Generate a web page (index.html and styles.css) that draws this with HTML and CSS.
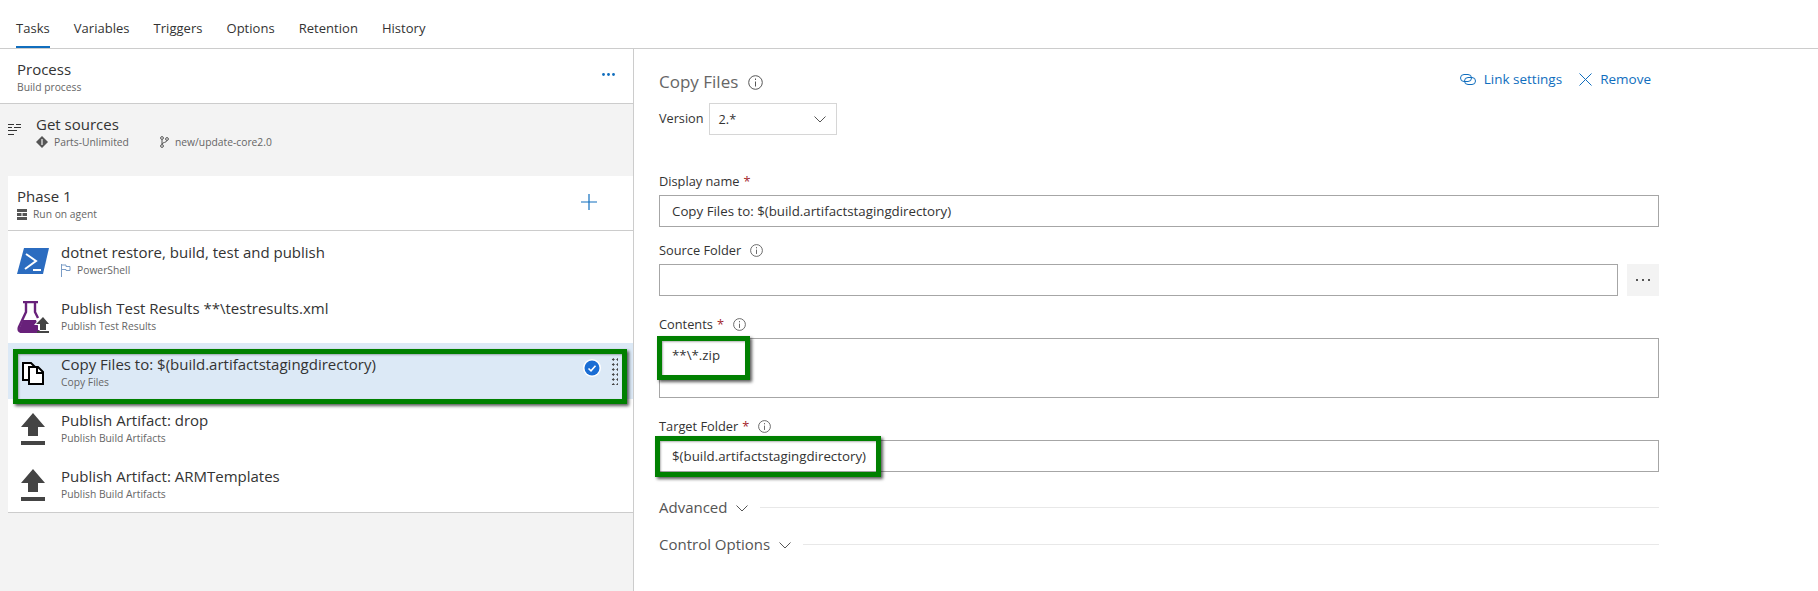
FILE: index.html
```html
<!DOCTYPE html>
<html lang="en">
<head>
    <meta charset="UTF-8">
    <title>Tasks</title>
    <link rel="stylesheet" href="styles.css">
</head>
<body>
    <!-- tabs -->
    <nav class="tabs">
        <span class="tab active">Tasks</span>
        <span class="tab">Variables</span>
        <span class="tab">Triggers</span>
        <span class="tab">Options</span>
        <span class="tab">Retention</span>
        <span class="tab">History</span>
    </nav>

    <div class="main">
        <!-- left list -->
        <section class="left">
            <div class="process">
                <div>
                    <div class="title">Process</div>
                    <div class="sub">Build process</div>
                </div>
                <svg class="more" width="13" height="3" viewBox="0 0 13 3"><circle cx="1.5" cy="1.5" r="1.4"/><circle cx="6.5" cy="1.5" r="1.4"/><circle cx="11.5" cy="1.5" r="1.4"/></svg>
            </div>

            <div class="sources">
                <svg class="sources-icon" width="14" height="13" viewBox="0 0 14 13"><path d="M1 1.5h6M9 1.5h5M1 4.5h4M7 4.5h7M1 7.5h9M1 11.5h6" stroke="#333" stroke-width="1" fill="none"/></svg>
                <div>
                    <div class="title">Get sources</div>
                    <div class="sub sources-sub">
                        <svg width="12" height="12" viewBox="0 0 12 12"><path d="M6 0l6 6-6 6-6-6z" fill="#555"/><path d="M6 3v6" stroke="#f3f3f3" stroke-width="1.2"/></svg>
                        <span class="repo">Parts-Unlimited</span>
                        <svg width="9" height="12" viewBox="0 0 9 12"><g fill="none" stroke="#555"><circle cx="2" cy="2" r="1.4"/><circle cx="2" cy="10" r="1.4"/><circle cx="7" cy="3" r="1.4"/><path d="M2 3.5v5M7 4.5c0 2-5 2-5 3.5"/></g></svg>
                        <span>new/update-core2.0</span>
                    </div>
                </div>
            </div>

            <div class="phase">
                <div class="phase-head">
                    <div>
                        <div class="title">Phase 1</div>
                        <div class="sub sub-icon">
                            <svg width="10" height="11" viewBox="0 0 10 11"><path d="M0 0h10v11H0z" fill="#555"/><path d="M0 3.5h10M0 7.5h10M5 3.5v4" stroke="#fff"/></svg>
                            <span>Run on agent</span>
                        </div>
                    </div>
                    <svg class="plus" width="16" height="16" viewBox="0 0 16 16"><path d="M8 0v16M0 8h16" stroke="#106ebe" stroke-width="1.2" fill="none"/></svg>
                </div>

                <ul class="steps">
                    <li class="step">
                        <svg class="step-icon" width="32" height="32" viewBox="0 0 32 32"><path d="M7 3h25l-6 26H0z" fill="#2b6cc0"/><path d="M9 9l10 7-11 8M16 25h8" fill="none" stroke="#fff" stroke-width="2"/></svg>
                        <div>
                            <div class="title">dotnet restore, build, test and publish</div>
                            <div class="sub sub-icon">
                                <svg width="10" height="13" viewBox="0 0 10 13"><path d="M.5 0v13M.5 1h4.500v1.500h4v4h-4V5.500h-4.500" fill="none" stroke="#7a9cc6"/></svg>
                                <span>PowerShell</span>
                            </div>
                        </div>
                    </li>
                    <li class="step">
                        <svg class="step-icon" width="32" height="32" viewBox="0 0 32 32"><path d="M6 1h15M9 1v10L2 26c-1 3 0 5 3 5h17M18 1v10l3 6" fill="none" stroke="#68217a" stroke-width="2.400"/><path d="M6 19h13l4 12H5c-3 0-3-3-2-5z" fill="#68217a"/><path d="M26 14l-9 10h4v5h10v-5h1z" fill="#fff"/><path d="M26 16l-7 7h4v6h6v-6h3z" fill="#444"/><path d="M20 31h12" stroke="#444" stroke-width="2"/></svg>
                        <div>
                            <div class="title">Publish Test Results **\testresults.xml</div>
                            <div class="sub">Publish Test Results</div>
                        </div>
                    </li>
                    <li class="step selected">
                        <svg class="step-icon" width="32" height="32" viewBox="0 0 32 32"><g fill="#fff" stroke="#000" stroke-width="2"><path d="M6 6h8l4 4v13H6z"/><path d="M12 10h9l5 5v12H12z"/></g><path d="M20 10v6h6" fill="none" stroke="#000" stroke-width="2"/></svg>
                        <div>
                            <div class="title">Copy Files to: $(build.artifactstagingdirectory)</div>
                            <div class="sub">Copy Files</div>
                        </div>
                        <svg class="check" width="18" height="18" viewBox="0 0 18 18"><circle cx="9" cy="9" r="9" fill="#fff"/><circle cx="9" cy="9" r="7.500" fill="#1a6dd4"/><path d="M5.500 9.500l2.500 2.300 4.500-5" fill="none" stroke="#fff" stroke-width="1.600"/></svg>
                        <span class="grip"></span>
                        <span class="mark mark-step"></span>
                    </li>
                    <li class="step">
                        <svg class="step-icon" width="32" height="32" viewBox="0 0 32 32"><path d="M16 0l12 14h-7v9h-10v-9H4zM4 28h24v4H4z" fill="#444"/></svg>
                        <div>
                            <div class="title">Publish Artifact: drop</div>
                            <div class="sub">Publish Build Artifacts</div>
                        </div>
                    </li>
                    <li class="step">
                        <svg class="step-icon" width="32" height="32" viewBox="0 0 32 32"><path d="M16 0l12 14h-7v9h-10v-9H4zM4 28h24v4H4z" fill="#444"/></svg>
                        <div>
                            <div class="title">Publish Artifact: ARMTemplates</div>
                            <div class="sub">Publish Build Artifacts</div>
                        </div>
                    </li>
                </ul>
            </div>
        </section>

        <!-- right form -->
        <section class="right">
            <div class="head">
                <h1 class="head-title">Copy Files
                    <svg class="info big" width="15" height="15" viewBox="0 0 15 15"><circle cx="7.500" cy="7.500" r="6.800"/><path d="M7.500 6.500v5M7.500 3.500v1.500"/></svg>
                </h1>
                <div class="links">
                    <span class="link">
                        <svg width="16" height="11" viewBox="0 0 16 11"><g fill="none" stroke="#106ebe"><rect x=".5" y=".5" width="11" height="7" rx="3.500"/><rect x="4.500" y="3.500" width="11" height="7" rx="3.500"/></g></svg>
                        Link settings
                    </span>
                    <span class="link">
                        <svg width="13" height="13" viewBox="0 0 13 13"><path d="M.5.500l12 12M12.500.500l-12 12" stroke="#106ebe" fill="none"/></svg>
                        Remove
                    </span>
                </div>
            </div>

            <div class="version">
                <span class="version-label">Version</span>
                <div class="select">
                    <span>2.*</span>
                    <svg class="chev" width="12" height="7" viewBox="0 0 12 7"><path d="M.5.500L6 6l5.500-5.500"/></svg>
                </div>
            </div>

            <div class="field first">
                <label>Display name <span class="req">*</span></label>
                <div class="input">Copy Files to: $(build.artifactstagingdirectory)</div>
            </div>

            <div class="field source">
                <label>Source Folder
                    <svg class="info" width="13" height="13" viewBox="0 0 15 15"><circle cx="7.500" cy="7.500" r="6.800"/><path d="M7.500 6.500v5M7.500 3.500v1.500"/></svg>
                </label>
                <div class="input-row">
                    <div class="input grow"></div>
                    <div class="browse">
                        <svg width="14" height="2" viewBox="0 0 14 2"><path d="M0 0h2v2H0zM6 0h2v2H6zM12 0h2v2h-2z" fill="#555"/></svg>
                    </div>
                </div>
            </div>

            <div class="field">
                <label>Contents <span class="req">*</span>
                    <svg class="info" width="13" height="13" viewBox="0 0 15 15"><circle cx="7.500" cy="7.500" r="6.800"/><path d="M7.500 6.500v5M7.500 3.500v1.500"/></svg>
                </label>
                <div class="input area">**\*.zip
                    <span class="mark mark-contents"></span>
                </div>
            </div>

            <div class="field">
                <label>Target Folder <span class="req">*</span>
                    <svg class="info" width="13" height="13" viewBox="0 0 15 15"><circle cx="7.500" cy="7.500" r="6.800"/><path d="M7.500 6.500v5M7.500 3.500v1.500"/></svg>
                </label>
                <div class="input">$(build.artifactstagingdirectory)
                    <span class="mark mark-target"></span>
                </div>
            </div>

            <div class="group advanced">
                <span>Advanced</span>
                <svg class="chev" width="12" height="7" viewBox="0 0 12 7"><path d="M.5.500L6 6l5.500-5.500"/></svg>
                <i class="rule"></i>
            </div>
            <div class="group">
                <span>Control Options</span>
                <svg class="chev" width="12" height="7" viewBox="0 0 12 7"><path d="M.5.500L6 6l5.500-5.500"/></svg>
                <i class="rule"></i>
            </div>
        </section>
    </div>
</body>
</html>
```

FILE: styles.css
```css
* {margin:0; padding:0; box-sizing:border-box;}
html, body {height:100%; overflow:hidden;}
body {
    font-family:"Open Sans", "Liberation Sans", sans-serif;
    font-size:13px;
    color:#333;
    background-color:#fff;
}

/* tabs */
.tabs {
    display:flex; gap:24px;
    height:49px;
    padding-left:16px;
    border-bottom:1px solid #ccc;
}
.tab {
    height:48px;
    padding-top:18px;
    line-height:20px;
    font-size:13px;
    letter-spacing:.03px;
}
.tab.active {border-bottom:2px solid #106ebe;}

.main {display:flex; height:542px;}

/* left */
.left {
    width:634px;
    background-color:#f3f3f3;
    border-right:1px solid #ccc;
}
.title {font-size:15px; line-height:19px; margin-bottom:1px; color:#333;}
.sub {font-size:10.3px; line-height:14px; color:#666;}
.sub-icon {display:flex; align-items:center; gap:6px;}

.process {
    display:flex; justify-content:space-between; align-items:flex-start;
    height:55px;
    padding:11px 18px 0 17px;
    background-color:#fff;
    border-bottom:1px solid #ccc;
}
.more {fill:#106ebe; margin-top:13px;}

.sources {
    display:flex;
    height:72px;
    padding:11px 0 0 7px;
}
.sources-icon {margin:8px 15px 0 0;}
.sources-sub {display:flex; align-items:center;}
.sources-sub svg {margin-right:6px;}
.repo {width:106px;}

.phase {
    margin-left:8px;
    background-color:#fff;
    border-bottom:1px solid #ccc;
}
.phase-head {
    display:flex; justify-content:space-between; align-items:flex-start;
    height:55px;
    padding:11px 36px 0 9px;
    border-bottom:1px solid #ccc;
}
.plus {margin-top:7px;}

.steps {list-style:none; padding-bottom:1px;}
.step {
    position:relative;
    display:flex;
    height:56px;
    padding:12px 0 0 9px;
}
.step-icon {margin:2px 12px 0 0;}
.step.selected {background-color:#dce9f6;}
.check {position:absolute; top:16px; right:32px;}
.grip {
    position:absolute; top:14px; right:15px;
    width:7px; height:28px;
    background-image:radial-gradient(circle, #444 1.1px, transparent 1.3px);
    background-size:4.500px 5px;
}

/* green marks over the content */
.mark {
    position:absolute;
    border:5px solid #008000;
    box-shadow:2px 2px 3px rgba(0,0,0,.65), inset 1px 1px 2px rgba(0,0,0,.3);
    pointer-events:none;
    z-index:2;
}
.mark-step {top:6px; left:5px; width:614px; height:55px;}
.mark-contents {top:-3px; left:-3px; width:93px; height:44px;}
.mark-target {top:-5px; left:-5px; width:226px; height:41px;}

/* right */
.right {flex:1; padding:20px 0 0 25px;}
.head {
    display:flex; justify-content:space-between; align-items:flex-start;
    width:992px;
}
.head-title {
    display:flex; align-items:center; gap:10px;
    margin-top:1px;
    font-size:17px; font-weight:400; line-height:24px; color:#666;
}
.info {fill:none; stroke:#555; stroke-width:1;}
.links {display:flex; gap:17px;}
.link {
    display:flex; align-items:center; gap:8px;
    line-height:20px; font-size:13.500px;
    color:#106ebe;
}

.version {
    display:flex; align-items:center; gap:5px;
    height:32px;
    margin-top:9px;
    font-size:12.700px;
}
.version-label {margin-bottom:2px;}
.select {
    display:flex; justify-content:space-between; align-items:center;
    width:128px; height:32px;
    padding:0 10px 0 9px;
    border:1px solid #d6d6d6;
}
.chev {fill:none; stroke:#555; stroke-width:1;}

.field {width:1000px; margin-top:18px;}
.field.first {margin-top:36px;}
.field.source {margin-top:13px;}
.field label {
    display:flex; align-items:center; gap:4px;
    height:20px; margin-bottom:4px;
    font-size:12.800px;
}
.field label .info {margin-left:5px;}
.req {color:#a4262c;}
.input {
    position:relative;
    height:32px;
    padding:0 12px;
    border:1px solid #a6a6a6;
    line-height:30px;
    font-size:13.300px;
}
.input.area {height:60px; padding-top:1px; line-height:30px;}
.input-row {display:flex; gap:9px;}
.grow {flex:1;}
.browse {
    display:flex; align-items:center; justify-content:center;
    width:32px; height:32px;
    background-color:#f3f3f3;
}

.group {
    display:flex; align-items:center;
    width:1000px; height:24px;
    margin-top:13px;
    font-size:15px;
    color:#555;
}
.group.advanced {margin-top:23px;}
.group .chev {margin:2px 12px 0 9px; flex:none;}
.rule {flex:1; height:1px; background-color:#e8e8e8;}
```
